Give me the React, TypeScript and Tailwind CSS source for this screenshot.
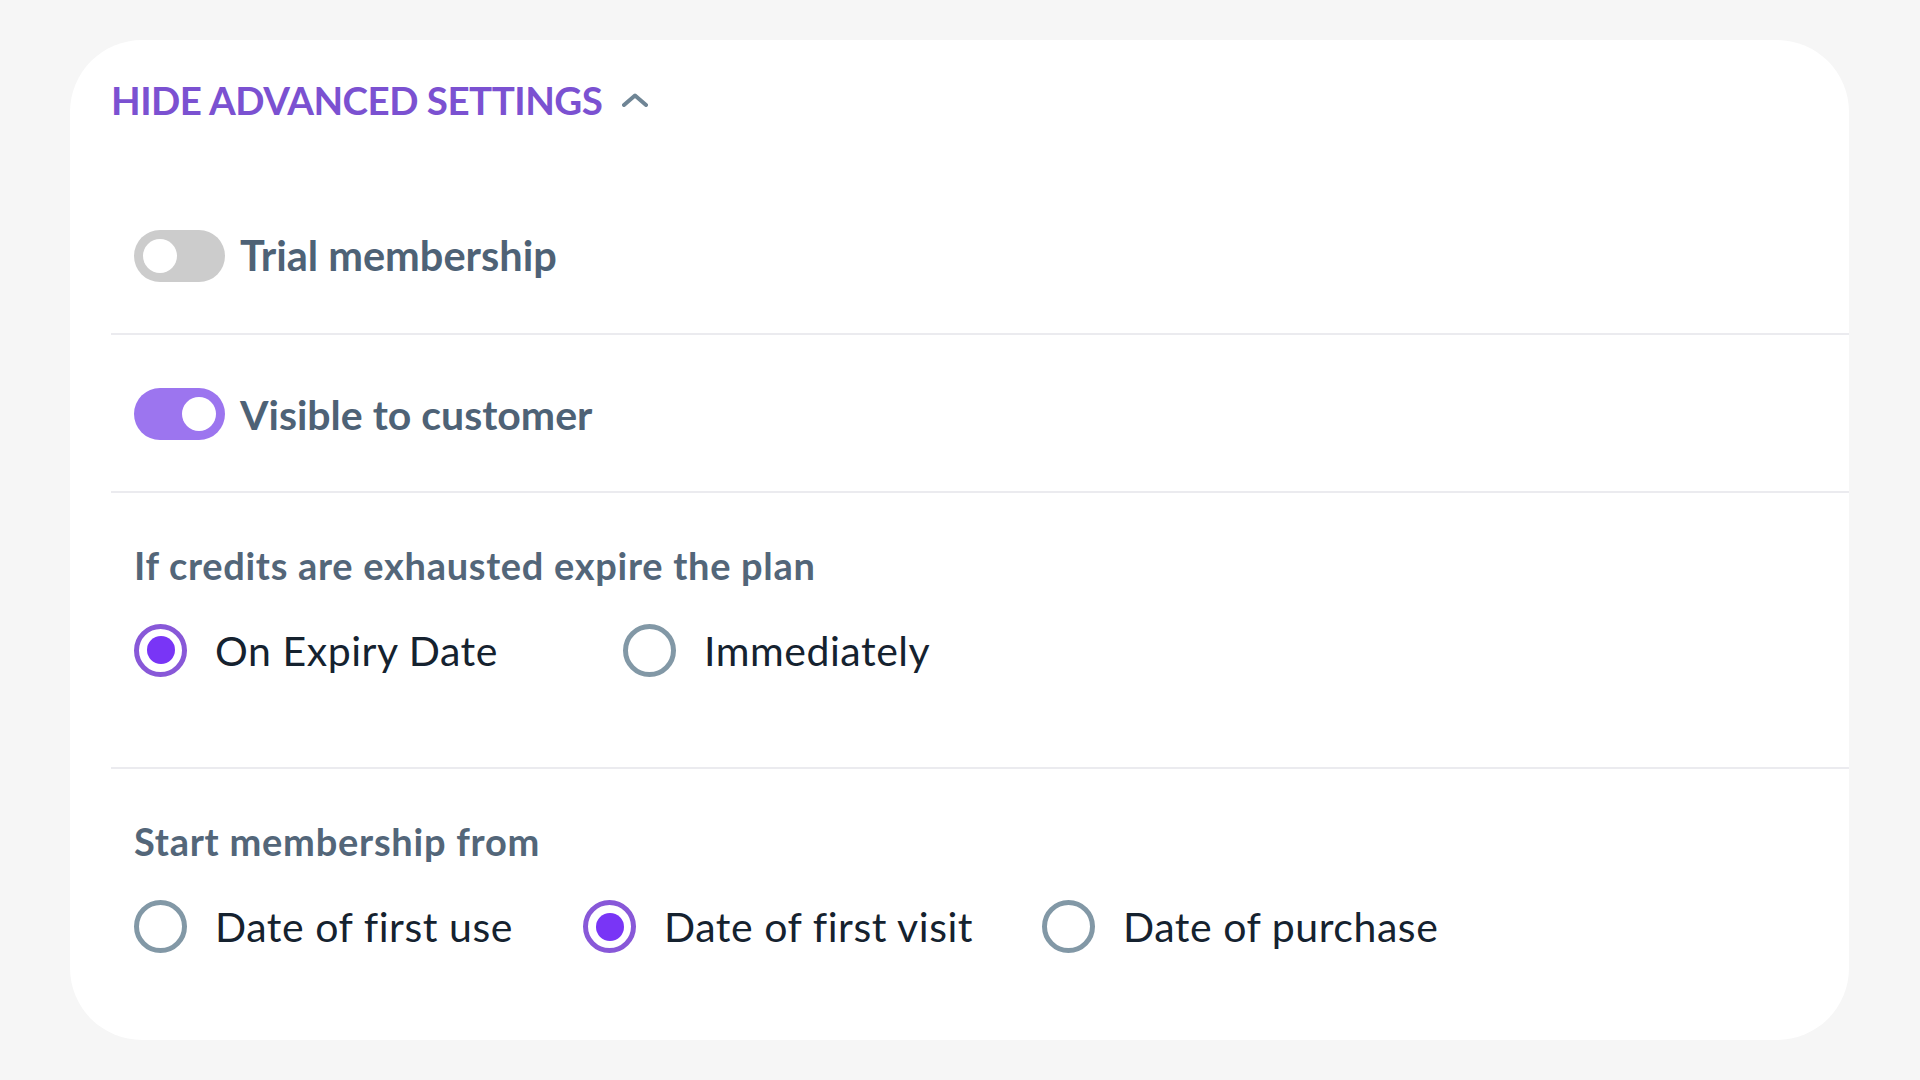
import { useState } from 'react'

function Toggle({ on }: { on: boolean }) {
  return (
    <div
      className={`w-[91px] h-[52px] rounded-full flex items-center px-[9px] shrink-0 ${
        on ? 'bg-[#9c75ef] justify-end' : 'bg-[#cccccc] justify-start'
      }`}
    >
      <div className="w-[34px] h-[34px] rounded-full bg-white" />
    </div>
  )
}

function Radio({ checked, label, width }: { checked: boolean; label: string; width: string }) {
  return (
    <div className={`flex items-center gap-[28px] ${width}`}>
      <div
        className={`w-[53px] h-[53px] rounded-full border-[5px] flex items-center justify-center shrink-0 ${
          checked ? 'border-[#8858d8]' : 'border-[#8298a6]'
        }`}
      >
        {checked && <div className="w-[28px] h-[28px] rounded-full bg-[#7935f6]" />}
      </div>
      <span className="text-[41px] leading-[1.2] tracking-[0.55px] text-[#15222f]">{label}</span>
    </div>
  )
}

export default function App() {
  const [open] = useState(true)

  return (
    <div className="min-h-screen w-full bg-[#f6f6f6] pt-[40px] pl-[70px] font-['Lato',sans-serif]">
      <div className="w-[1779px] h-[1000px] bg-white rounded-[72px] pt-[37px] pl-[41px]">
        <div className="flex items-center gap-[20px]">
          <span className="text-[38.5px] leading-[1.2] tracking-[-0.5px] font-bold text-[#7b51d1] uppercase">
            Hide advanced settings
          </span>
          <svg width="26" height="14" viewBox="0 0 26 14" className={open ? '' : 'rotate-180'}>
            <polyline
              points="2,12 13,2.5 24,12"
              fill="none"
              stroke="#6f8595"
              strokeWidth="4"
              strokeLinecap="round"
              strokeLinejoin="round"
            />
          </svg>
        </div>

        <div className="mt-[107px] pl-[23px] pb-[51px] border-b-2 border-[#ebebef] flex items-center gap-[15px]">
          <Toggle on={false} />
          <span className="text-[41.5px] leading-[1.2] font-bold text-[#4e6276]">Trial membership</span>
        </div>

        <div className="pt-[53px] pl-[23px] pb-[51px] border-b-2 border-[#ebebef] flex items-center gap-[15px]">
          <Toggle on={true} />
          <span className="text-[41px] leading-[1.2] font-bold text-[#4e6276]">Visible to customer</span>
        </div>

        <div className="pt-[50px] pl-[23px] pb-[90px] border-b-2 border-[#ebebef]">
          <p className="text-[38px] leading-[1.2] tracking-[0.7px] font-bold text-[#536679]">
            If credits are exhausted expire the plan
          </p>
          <div className="mt-[35px] flex items-center">
            <Radio checked={true} label="On Expiry Date" width="w-[489px]" />
            <Radio checked={false} label="Immediately" width="w-auto" />
          </div>
        </div>

        <div className="pt-[50px] pl-[23px]">
          <p className="text-[38px] leading-[1.2] tracking-[0.75px] font-bold text-[#536679]">
            Start membership from
          </p>
          <div className="mt-[36px] flex items-center">
            <Radio checked={false} label="Date of first use" width="w-[449px]" />
            <Radio checked={true} label="Date of first visit" width="w-[459px]" />
            <Radio checked={false} label="Date of purchase" width="w-auto" />
          </div>
        </div>
      </div>
    </div>
  )
}
